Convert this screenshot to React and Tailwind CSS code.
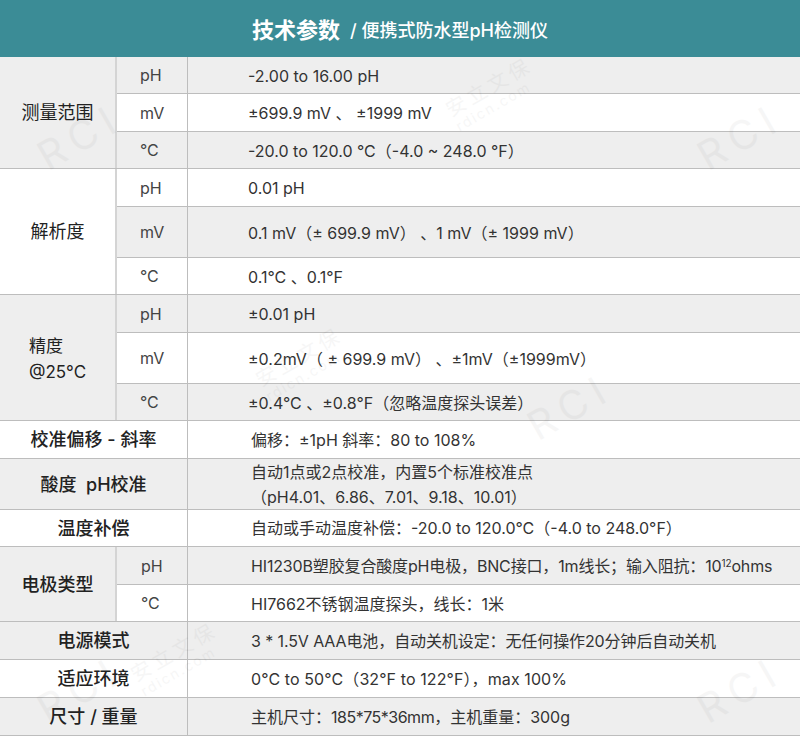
const F = "font-['Inter','Noto_Sans_CJK_SC',sans-serif]";

function Sub({ label, value, h, grey, last }) {
  return (
    <div className={`flex ${h} ${grey ? "bg-[#eeeeee]" : "bg-white"} ${last ? "" : "border-b border-[#bdbdbd]"}`}>
      <div className="w-[71px] shrink-0 border-r border-[#bdbdbd] flex items-center pl-[23px] text-[16px] text-[#444]">{label}</div>
      <div className="flex-1 flex items-center pl-[60px] pt-[1px] text-[16px] text-[#333] whitespace-pre">{value}</div>
    </div>
  );
}

function Group({ title, grey, rows, pad = 'pl-0', left = 'justify-center' }) {
  return (
    <div className="flex border-b border-[#bdbdbd]">
      <div className={`w-[117px] shrink-0 flex items-center ${left} ${pad} border-r-2 border-[#d4d4d4] text-[18px] text-[#222] ${grey ? "bg-[#eeeeee]" : "bg-white"}`}>{title}</div>
      <div className="flex-1 flex flex-col">
        {rows.map((r, i) => <Sub key={i} {...r} last={i === rows.length - 1} />)}
      </div>
    </div>
  );
}

function Wide({ title, h, grey, children }) {
  return (
    <div className={`flex ${h} border-b border-[#bdbdbd] ${grey ? "bg-[#eeeeee]" : "bg-white"}`}>
      <div className="w-[188px] shrink-0 border-r border-[#bdbdbd] flex items-center justify-center text-[18px] text-[#222] font-medium whitespace-pre">{title}</div>
      <div className="flex-1 flex flex-col justify-center pl-[63px] pt-[1px] text-[16px] leading-[25px] text-[#333] whitespace-nowrap">{children}</div>
    </div>
  );
}

function Mark({ className }) {
  return (
    <div className={`absolute pointer-events-none -rotate-[30deg] text-black opacity-[0.03] ${className}`}>
      <div className="text-[20px] leading-[22px] tracking-[4px]">安立文保</div>
      <div className="text-[14px] leading-[16px] tracking-[2px]">rdicn.com</div>
    </div>
  );
}

function Rci({ className }) {
  return (
    <div className={`absolute pointer-events-none -rotate-[30deg] text-[40px] leading-[44px] tracking-[8px] text-black opacity-[0.03] ${className}`}>RCI</div>
  );
}

export default function App() {
  return (
    <div className={`relative w-[800px] h-[736px] overflow-hidden bg-white ${F}`}>
      <div className="h-[57px] pt-[3px] bg-[#3b8c96] flex items-center justify-center text-white">
        <span className="text-[22px] font-bold">技术参数</span>
        <span className="text-[18px] font-medium ml-[10px]">/ 便携式防水型pH检测仪</span>
      </div>
      <Group title="测量范围" grey rows={[
        { label: "pH", value: "-2.00 to 16.00 pH", h: "h-[37px]", grey: true },
        { label: "mV", value: "±699.9 mV 、 ±1999 mV", h: "h-[38px]" },
        { label: "°C", value: "-20.0 to 120.0 °C（-4.0 ~ 248.0 °F）", h: "h-[36px]", grey: true },
      ]} />
      <Group title="解析度" rows={[
        { label: "pH", value: "0.01 pH", h: "h-[38px]" },
        { label: "mV", value: "0.1 mV（± 699.9 mV） 、1 mV（± 1999 mV）", h: "h-[51px]", grey: true },
        { label: "°C", value: "0.1°C 、0.1°F", h: "h-[36px]" },
      ]} />
      <Group title={<span className="leading-[26px] pt-[3px] text-[17px]">精度<br />@25°C</span>} grey left="justify-start" pad="pl-[29px]" rows={[
        { label: "pH", value: "±0.01 pH", h: "h-[38px]", grey: true },
        { label: "mV", value: "±0.2mV（ ± 699.9 mV） 、±1mV（±1999mV）", h: "h-[51px]" },
        { label: "°C", value: "±0.4°C 、±0.8°F（忽略温度探头误差）", h: "h-[36px]", grey: true },
      ]} />
      <Wide title="校准偏移 - 斜率" h="h-[38px]">偏移：±1pH 斜率：80 to 108%</Wide>
      <Wide title="酸度  pH校准" h="h-[51px]" grey>
        <div>自动1点或2点校准，内置5个标准校准点</div>
        <div>（pH4.01、6.86、7.01、9.18、10.01）</div>
      </Wide>
      <Wide title="温度补偿" h="h-[37px]">自动或手动温度补偿：-20.0 to 120.0°C（-4.0 to 248.0°F）</Wide>
      <div className="flex border-b border-[#bdbdbd]">
        <div className="w-[117px] shrink-0 flex items-center justify-center border-r-2 border-[#d4d4d4] text-[18px] text-[#222] font-medium bg-[#eeeeee]">电极类型</div>
        <div className="flex-1 flex flex-col">
          <div className="flex h-[38px] bg-[#eeeeee] border-b border-[#bdbdbd]">
            <div className="w-[71px] shrink-0 border-r border-[#bdbdbd] flex items-center pl-[24px] text-[16px] text-[#444]">pH</div>
            <div className="flex-1 flex items-center pl-[63px] pt-[1px] text-[16px] tracking-[-0.15px] text-[#333] whitespace-nowrap">HI1230B塑胶复合酸度pH电极，BNC接口，1m线长；输入阻抗：10<span className="text-[10px] leading-none self-start mt-[10px]">12</span>ohms</div>
          </div>
          <div className="flex h-[36px] bg-white">
            <div className="w-[71px] shrink-0 border-r border-[#bdbdbd] flex items-center pl-[24px] text-[16px] text-[#444]">°C</div>
            <div className="flex-1 flex items-center pl-[63px] pt-[1px] text-[16px] text-[#333] whitespace-nowrap">HI7662不锈钢温度探头，线长：1米</div>
          </div>
        </div>
      </div>
      <Wide title="电源模式" h="h-[38px]" grey><span className="tracking-[-0.1px]">3 * 1.5V AAA电池，自动关机设定：无任何操作20分钟后自动关机</span></Wide>
      <Wide title="适应环境" h="h-[38px]"><span className="tracking-[0.1px]">0°C to 50°C（32°F to 122°F），max 100%</span></Wide>
      <Wide title="尺寸 / 重量" h="h-[38px]" grey><div>主机尺寸：<span className="tracking-[-0.5px]">185*75*36mm</span>，主机重量：300g</div></Wide>

      <Rci className="left-[35px] top-[115px]" />
      <Mark className="left-[445px] top-[75px]" />
      <Rci className="left-[695px] top-[115px]" />
      <Mark className="left-[255px] top-[345px]" />
      <Rci className="left-[525px] top-[385px]" />
      <Mark className="left-[130px] top-[640px]" />
      <Rci className="left-[35px] top-[668px]" />
      <Rci className="left-[695px] top-[668px]" />
    </div>
  );
}
